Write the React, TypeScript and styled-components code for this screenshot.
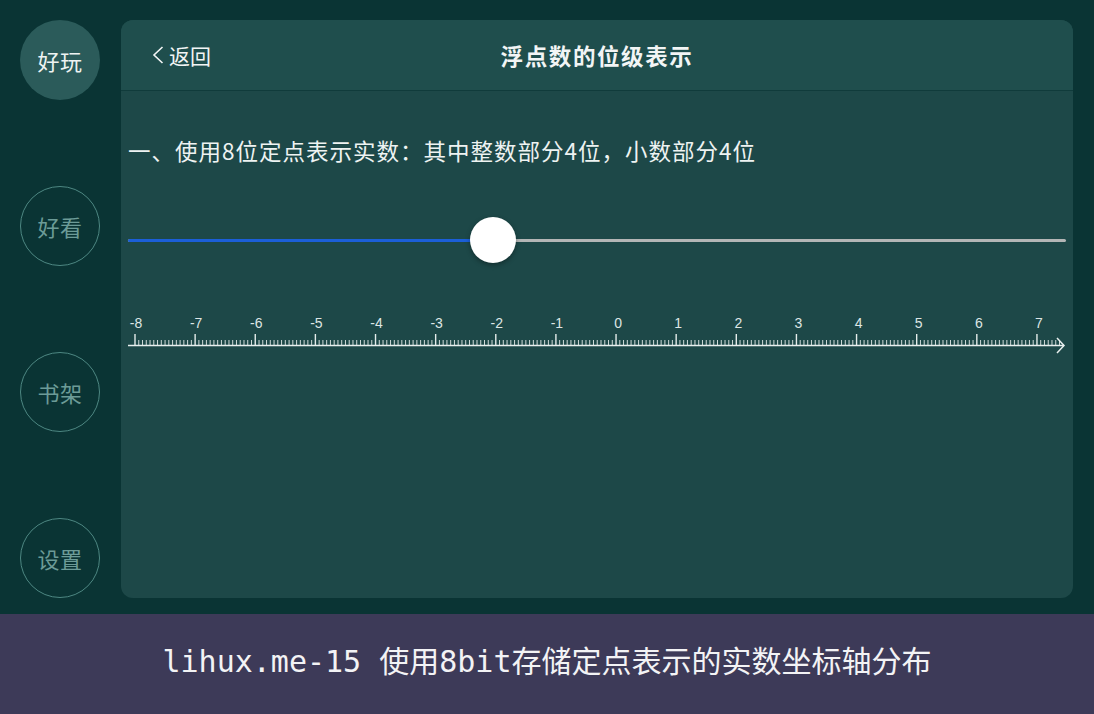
import React from "react";
import styled, { createGlobalStyle } from "styled-components";

const Global = createGlobalStyle`
  html, body { margin: 0; padding: 0; background: #0a3434; }
  body { font-family: "Noto Sans CJK SC", "Noto Sans", sans-serif; }
  * { box-sizing: border-box; }
`;

const Page = styled.div`
  width: 1094px;
  height: 714px;
  display: flex;
  flex-direction: column;
  background: #0a3434;
  overflow: hidden;
`;

const Main = styled.div`
  height: 614px;
  display: flex;
`;

const Sidebar = styled.nav`
  width: 121px;
  padding: 20px 0 0 20px;
  display: flex;
  flex-direction: column;
  gap: 86px;
`;

const NavCircle = styled.div<{ $active?: boolean }>`
  width: 80px;
  height: 80px;
  border-radius: 50%;
  display: flex;
  align-items: center;
  justify-content: center;
  font-size: 22px;
  letter-spacing: 0.5px;
  background: ${(p) => (p.$active ? "#2b5b5a" : "transparent")};
  border: ${(p) => (p.$active ? "none" : "1.5px solid #4d8782")};
  color: ${(p) => (p.$active ? "#eef3f2" : "#6c9b97")};
`;

const PanelWrap = styled.div`
  flex: 1;
  padding: 20px 21px 16px 0;
  display: flex;
`;

const Panel = styled.section`
  flex: 1;
  border-radius: 12px;
  background: #1d4848;
  overflow: hidden;
  display: flex;
  flex-direction: column;
`;

const Header = styled.header`
  height: 71px;
  background: #1f4e4d;
  border-bottom: 1px solid #103b3b;
  display: grid;
  grid-template-columns: 1fr auto 1fr;
  align-items: center;
  padding: 0 31px;
  color: #f2f5f5;
`;

const Back = styled.div`
  display: flex;
  align-items: center;
  gap: 5px;
  font-size: 21px;
  padding-bottom: 1px;
`;

const Title = styled.h1`
  margin: 0;
  font-size: 22.5px;
  font-weight: 700;
  letter-spacing: 1.6px;
  padding-bottom: 1px;
`;

const Body = styled.div`
  padding: 0 7px;
  display: flex;
  flex-direction: column;
`;

const Intro = styled.p`
  margin: 43px 0 0;
  font-size: 22.5px;
  line-height: 32px;
  color: #eef3f2;
  letter-spacing: 1px;
`;

const SliderRow = styled.div`
  margin-top: 51px;
  height: 46px;
  position: relative;
  display: flex;
  align-items: center;
`;

const Track = styled.div`
  flex: 1;
  height: 3px;
  border-radius: 2px;
  background: #b3b6b6;
  position: relative;
`;

const Fill = styled.div`
  position: absolute;
  left: 0;
  top: 0;
  bottom: 0;
  background: #1b5fd8;
  border-radius: 2px;
`;

const Thumb = styled.div`
  position: absolute;
  top: 0;
  width: 46px;
  height: 46px;
  margin-left: -23px;
  border-radius: 50%;
  background: #ffffff;
  box-shadow: 0 2px 5px rgba(0, 0, 0, 0.35);
`;

const RulerSvg = styled.svg`
  margin-top: 49px;
  display: block;
`;

const Caption = styled.footer`
  height: 100px;
  background: #3d3a58;
  display: flex;
  align-items: center;
  justify-content: center;
  color: #f3f3f5;
  font-family: "DejaVu Sans Mono", "Noto Sans CJK SC", monospace;
  font-size: 30px;
  padding-bottom: 10px;
`;

const Ruler: React.FC = () => {
  const W = 938;
  const step = 60.13;
  const x0 = 7;
  const baseY = 33;
  const ticks: React.ReactNode[] = [];
  const total = 15 * 16 + 6;
  for (let i = 0; i <= total; i++) {
    const x = x0 + (i * step) / 16;
    const major = i % 16 === 0;
    ticks.push(
      <line
        key={i}
        x1={x}
        x2={x}
        y1={major ? baseY - 11 : baseY - 5}
        y2={baseY}
        stroke="#e4ecea"
        strokeWidth={major ? 1.4 : 0.9}
      />
    );
  }
  const labels = [];
  for (let v = -8; v <= 7; v++) {
    const x = x0 + (v + 8) * step;
    labels.push(
      <text
        key={v}
        x={x + (v < 0 ? 1 : 2)}
        y={16}
        fontSize={14}
        textAnchor="middle"
        fill="#dde6e5"
        fontFamily="Liberation Sans, Arial, sans-serif"
      >
        {v < 0 ? `-${-v}` : v}
      </text>
    );
  }
  return (
    <RulerSvg width={W} height={44} viewBox={`0 0 ${W} 44`}>
      {labels}
      {ticks}
      <line x1={0} x2={W - 2} y1={baseY + 0.5} y2={baseY + 0.5} stroke="#e8efee" strokeWidth={1.6} />
      <polyline
        points={`${W - 9},${baseY - 7} ${W - 2},${baseY + 0.5} ${W - 9},${baseY + 8}`}
        fill="none"
        stroke="#e8efee"
        strokeWidth={1.5}
      />
    </RulerSvg>
  );
};

export default function App() {
  const value = 0.389;
  return (
    <Page>
      <Global />
      <Main>
        <Sidebar>
          <NavCircle $active>好玩</NavCircle>
          <NavCircle>好看</NavCircle>
          <NavCircle>书架</NavCircle>
          <NavCircle>设置</NavCircle>
        </Sidebar>
        <PanelWrap>
          <Panel>
            <Header>
              <Back>
                <svg width="12" height="20" viewBox="0 0 12 20">
                  <polyline points="10.5,2 2,10 10.5,18" fill="none" stroke="#f2f5f5" strokeWidth="1.6" />
                </svg>
                返回
              </Back>
              <Title>浮点数的位级表示</Title>
              <div />
            </Header>
            <Body>
              <Intro>一、使用8位定点表示实数：其中整数部分4位，小数部分4位</Intro>
              <SliderRow>
                <Track>
                  <Fill style={{ width: `${value * 100}%` }} />
                </Track>
                <Thumb style={{ left: `${value * 100}%` }} />
              </SliderRow>
              <Ruler />
            </Body>
          </Panel>
        </PanelWrap>
      </Main>
      <Caption>lihux.me-15 使用8bit存储定点表示的实数坐标轴分布</Caption>
    </Page>
  );
}
